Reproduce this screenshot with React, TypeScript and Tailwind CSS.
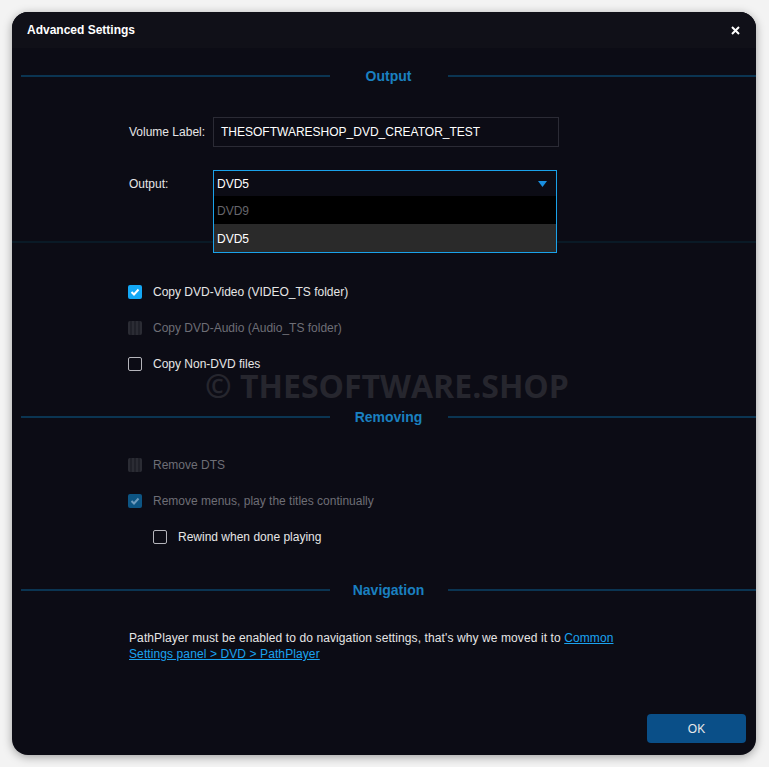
import React from 'react';

const font = { fontFamily: '"Liberation Sans", Arial, sans-serif' };

type BoxKind = 'checked' | 'unchecked' | 'disabled' | 'disabledChecked';

function Box({ kind }: { kind: BoxKind }) {
  if (kind === 'checked') {
    return (
      <div className="w-[14px] h-[14px] rounded-[2px] bg-[#14a8f5] flex items-center justify-center">
        <svg width="10" height="8" viewBox="0 0 10 8">
          <polyline points="1.5,4 4,6.5 8.5,1.5" fill="none" stroke="#fff" strokeWidth="2" />
        </svg>
      </div>
    );
  }
  if (kind === 'disabledChecked') {
    return (
      <div className="w-[14px] h-[14px] rounded-[2px] bg-[#0d5583] flex items-center justify-center">
        <svg width="10" height="8" viewBox="0 0 10 8">
          <polyline points="1.5,4 4,6.5 8.5,1.5" fill="none" stroke="#6f9cbd" strokeWidth="2" />
        </svg>
      </div>
    );
  }
  if (kind === 'disabled') {
    return <div className="w-[14px] h-[14px] rounded-[2px] bg-[repeating-linear-gradient(90deg,#2b2c34_0_2px,#202129_2px_4px)]" />;
  }
  return <div className="w-[14px] h-[14px] rounded-[2px] border border-[#b5b5bb]" />;
}

function CheckRow({ kind, label, indent }: { kind: BoxKind; label: string; indent?: boolean }) {
  const dim = kind === 'disabled' || kind === 'disabledChecked';
  return (
    <div className={`h-[36px] flex items-center gap-[11px] ${indent ? 'pl-[141px]' : 'pl-[116px]'}`}>
      <Box kind={kind} />
      <span className={`text-[12px] ${dim ? 'text-[#6e6e76]' : 'text-[#e6e6e6]'}`}>{label}</span>
    </div>
  );
}

function SectionHeader({ title }: { title: string }) {
  return (
    <div className="h-[20px] ml-[9px] flex items-center">
      <div className="flex-1 h-[2px] bg-[#0b3552]" />
      <div className="w-[118px] text-center text-[14px] font-bold text-[#1a80c0]">{title}</div>
      <div className="flex-1 h-[2px] bg-[#0b3552]" />
    </div>
  );
}

export default function App() {
  return (
    <div className="w-[769px] h-[767px] bg-[#f3f3f3] pt-[12px] pl-[12px]" style={font}>
      <div className="relative w-[744px] h-[743px] rounded-[16px] overflow-hidden bg-[#0c0c15] shadow-[0_2px_10px_rgba(0,0,0,0.35)] flex flex-col">
        <div className="h-[36px] bg-[#101018] flex items-center justify-between pl-[15px] pr-[16px]">
          <span className="text-[12px] font-bold text-white">Advanced Settings</span>
          <svg width="9" height="9" viewBox="0 0 9 9">
            <path d="M1 1L8 8M8 1L1 8" stroke="#fff" strokeWidth="2" />
          </svg>
        </div>

        <div className="absolute left-0 right-0 top-[229px] h-[2px] bg-[#0a1a26]" />
        <div className="absolute left-[193px] top-[350px] text-[32px] font-bold text-[#26262e]" style={{ fontFamily: '"Open Sans", "Liberation Sans", sans-serif' }}>
          © THESOFTWARE.SHOP
        </div>

        <div className="relative mt-[18px]">
          <SectionHeader title="Output" />
        </div>

        <div className="relative mt-[31px] pl-[117px] flex items-center">
          <span className="w-[84px] text-[12px] text-[#e6e6e6]">Volume Label:</span>
          <div className="w-[346px] h-[30px] border border-[#2b2b35] flex items-center pl-[7px] text-[12px] text-white">
            THESOFTWARESHOP_DVD_CREATOR_TEST
          </div>
        </div>

        <div className="relative mt-[23px] pl-[117px] flex items-center z-10">
          <span className="w-[84px] text-[12px] text-[#e6e6e6]">Output:</span>
          <div className="relative w-[344px] h-[27px] border border-[#1aa2ea] flex items-center justify-between pl-[3px] pr-[9px] text-[12px] text-white">
            <span>DVD5</span>
            <svg width="9" height="6" viewBox="0 0 9 6">
              <path d="M0 0H9L4.5 6Z" fill="#1a8fe0" />
            </svg>
            <div className="absolute left-[-1px] right-[-1px] top-full border border-t-0 border-[#1aa2ea] text-[12px]">
              <div className="h-[28px] bg-black flex items-center pl-[3px] pt-[2px] text-[#66666c]">DVD9</div>
              <div className="h-[28px] bg-[#2a2a2a] flex items-center pl-[3px] pt-[2px] text-white">DVD5</div>
            </div>
          </div>
        </div>

        <div className="relative mt-[77px]">
          <CheckRow kind="checked" label="Copy DVD-Video (VIDEO_TS folder)" />
          <CheckRow kind="disabled" label="Copy DVD-Audio (Audio_TS folder)" />
          <CheckRow kind="unchecked" label="Copy Non-DVD files" />
        </div>

        <div className="relative mt-[25px]">
          <SectionHeader title="Removing" />
        </div>

        <div className="relative mt-[20px]">
          <CheckRow kind="disabled" label="Remove DTS" />
          <CheckRow kind="disabledChecked" label="Remove menus, play the titles continually" />
          <CheckRow kind="unchecked" label="Rewind when done playing" indent />
        </div>

        <div className="relative mt-[25px]">
          <SectionHeader title="Navigation" />
        </div>

        <p className="relative mt-[30px] ml-[117px] w-[500px] text-[12px] leading-[16px] tracking-[0.1px] text-[#e6e6e6]">
          PathPlayer must be enabled to do navigation settings, that's why we moved it to{' '}
          <a className="text-[#1ba3f0] underline">Common Settings panel &gt; DVD &gt; PathPlayer</a>
        </p>

        <div className="mt-auto mb-[12px] mr-[10px] flex justify-end">
          <button className="w-[99px] h-[29px] rounded-[4px] bg-[#0a4f88] text-[12px] text-[#e8e8e8]">OK</button>
        </div>
      </div>
    </div>
  );
}
